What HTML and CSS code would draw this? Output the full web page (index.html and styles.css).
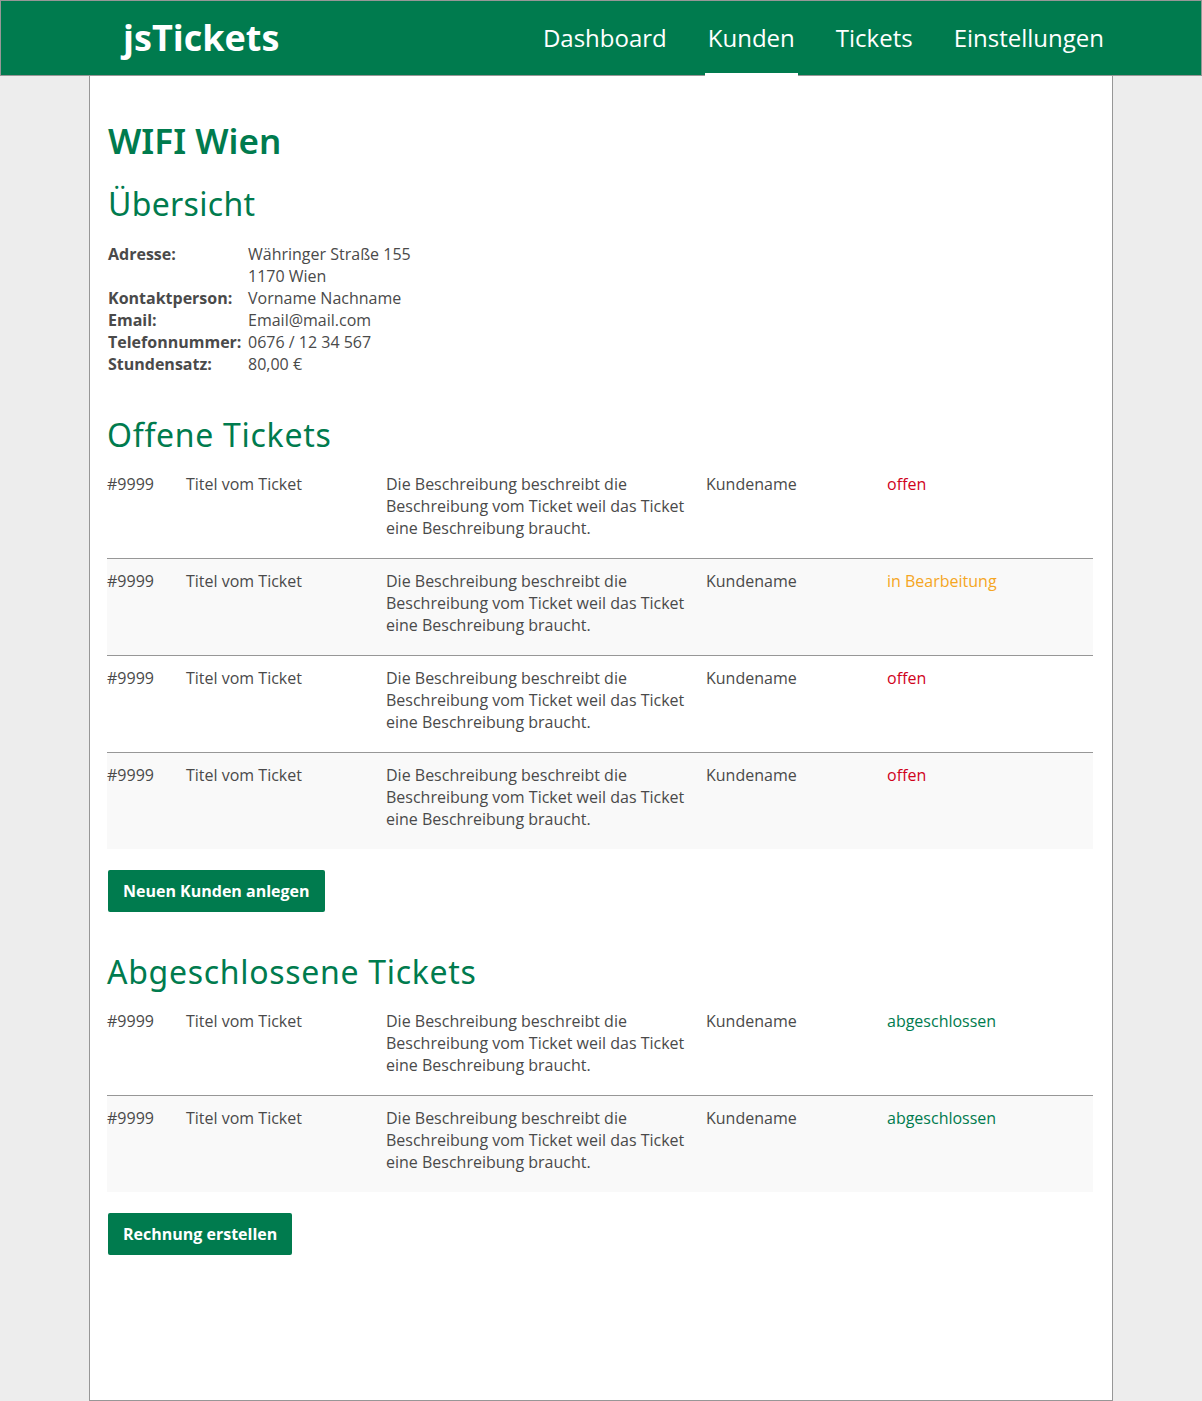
FILE: index.html
```html
<!DOCTYPE html>
<html lang="de">
<head>
<meta charset="utf-8">
<title>jsTickets – WIFI Wien</title>
<link rel="stylesheet" href="styles.css">
</head>
<body>
<header class="topbar">
  <div class="topbar-inner">
    <div class="logo">jsTickets</div>
    <nav class="nav">
      <a class="nav-link" href="#">Dashboard</a>
      <a class="nav-link active" href="#">Kunden</a>
      <a class="nav-link" href="#">Tickets</a>
      <a class="nav-link" href="#">Einstellungen</a>
    </nav>
  </div>
</header>
<main class="page">
  <h1 class="title">WIFI Wien</h1>
  <h2 class="section-title first">Übersicht</h2>
  <dl class="info">
    <dt>Adresse:</dt><dd>Währinger Straße 155<br>1170 Wien</dd>
    <dt>Kontaktperson:</dt><dd>Vorname Nachname</dd>
    <dt>Email:</dt><dd>Email@mail.com</dd>
    <dt>Telefonnummer:</dt><dd>0676 / 12 34 567</dd>
    <dt>Stundensatz:</dt><dd>80,00 €</dd>
  </dl>

  <h2 class="section-title">Offene Tickets</h2>
  <div class="tickets">
    <div class="ticket">
      <span class="c-id">#9999</span><span class="c-title">Titel vom Ticket</span>
      <span class="c-desc">Die Beschreibung beschreibt die Beschreibung vom Ticket weil das Ticket eine Beschreibung braucht.</span>
      <span class="c-client">Kundename</span><span class="c-status s-open">offen</span>
    </div>
    <div class="ticket alt">
      <span class="c-id">#9999</span><span class="c-title">Titel vom Ticket</span>
      <span class="c-desc">Die Beschreibung beschreibt die Beschreibung vom Ticket weil das Ticket eine Beschreibung braucht.</span>
      <span class="c-client">Kundename</span><span class="c-status s-progress">in Bearbeitung</span>
    </div>
    <div class="ticket">
      <span class="c-id">#9999</span><span class="c-title">Titel vom Ticket</span>
      <span class="c-desc">Die Beschreibung beschreibt die Beschreibung vom Ticket weil das Ticket eine Beschreibung braucht.</span>
      <span class="c-client">Kundename</span><span class="c-status s-open">offen</span>
    </div>
    <div class="ticket alt">
      <span class="c-id">#9999</span><span class="c-title">Titel vom Ticket</span>
      <span class="c-desc">Die Beschreibung beschreibt die Beschreibung vom Ticket weil das Ticket eine Beschreibung braucht.</span>
      <span class="c-client">Kundename</span><span class="c-status s-open">offen</span>
    </div>
  </div>
  <button class="btn" type="button">Neuen Kunden anlegen</button>

  <h2 class="section-title">Abgeschlossene Tickets</h2>
  <div class="tickets">
    <div class="ticket">
      <span class="c-id">#9999</span><span class="c-title">Titel vom Ticket</span>
      <span class="c-desc">Die Beschreibung beschreibt die Beschreibung vom Ticket weil das Ticket eine Beschreibung braucht.</span>
      <span class="c-client">Kundename</span><span class="c-status s-done">abgeschlossen</span>
    </div>
    <div class="ticket alt">
      <span class="c-id">#9999</span><span class="c-title">Titel vom Ticket</span>
      <span class="c-desc">Die Beschreibung beschreibt die Beschreibung vom Ticket weil das Ticket eine Beschreibung braucht.</span>
      <span class="c-client">Kundename</span><span class="c-status s-done">abgeschlossen</span>
    </div>
  </div>
  <button class="btn" type="button">Rechnung erstellen</button>
</main>
</body>
</html>
```

FILE: styles.css
```css
* { box-sizing: border-box; }

html, body {
  margin: 0;
  padding: 0;
}

body {
  background: #ededed;
  font-family: "Open Sans", "Noto Sans", sans-serif;
  font-size: 16px;
  line-height: 22px;
  color: #4a4a4a;
}

.topbar {
  background: #007b4e;
  border: 1px solid #979797;
  height: 76px;
}

.topbar-inner {
  width: 1024px;
  margin: 0 auto;
  height: 74px;
  display: flex;
  align-items: center;
  justify-content: space-between;
  padding: 0 6px 0 34px;
}

.logo {
  color: #fff;
  font-weight: 700;
  font-size: 36px;
  line-height: 74px;
}

.nav {
  display: flex;
  gap: 35px;
  height: 74px;
}

.nav-link {
  position: relative;
  color: #fff;
  text-decoration: none;
  font-size: 24px;
  line-height: 74px;
  padding: 0 3px;
}

.nav-link.active::after {
  content: "";
  position: absolute;
  left: 0;
  right: 0;
  bottom: -2px;
  height: 4px;
  background: #fff;
}

.page {
  width: 1024px;
  margin: 0 auto;
  min-height: 1325px;
  background: #fff;
  border: 1px solid #979797;
  border-top: 0;
  padding: 43px 19px 145px 17px;
}

.title {
  margin: 0;
  font-family: "Noto Sans", "Open Sans", sans-serif;
  font-weight: 600;
  font-size: 35px;
  line-height: 44px;
  color: #007b4e;
  padding-left: 1px;
}

.section-title {
  margin: 40px 0 0;
  font-family: "Noto Sans", "Open Sans", sans-serif;
  font-weight: 400;
  font-size: 32px;
  line-height: 40px;
  letter-spacing: 0.7px;
  color: #007b4e;
}

.section-title.first {
  margin-top: 21px;
  padding-left: 1px;
  letter-spacing: 0.3px;
}

.info {
  margin: 19px 0 0;
  padding-left: 1px;
  display: grid;
  grid-template-columns: 140px 1fr;
}

.info dt {
  font-weight: 700;
  color: #4a4a4a;
}

.info dd {
  margin: 0;
}

.tickets {
  margin-top: 7px;
}

.ticket {
  display: grid;
  grid-template-columns: 79px 200px 320px 181px 1fr;
  padding: 11px 0 19px;
  min-height: 96px;
}

.ticket + .ticket {
  border-top: 1px solid #979797;
}

.ticket.alt {
  background: #f9f9f9;
}

.c-desc {
  padding-right: 12px;
}

.s-open { color: #d0021b; }
.s-progress { color: #f5a623; }
.s-done { color: #007b4e; }

.btn {
  display: block;
  margin: 21px 0 0 1px;
  height: 42px;
  padding: 0 15px;
  border: 0;
  border-radius: 2px;
  background: #007b4e;
  color: #fff;
  font-family: "Open Sans", sans-serif;
  font-weight: 700;
  font-size: 16px;
  cursor: pointer;
}
```
